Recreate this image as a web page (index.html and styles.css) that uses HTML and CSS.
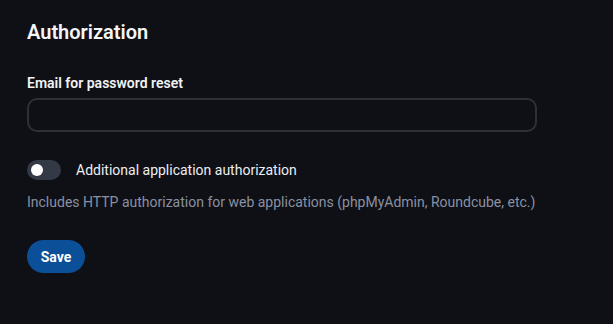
FILE: index.html
```html
<!DOCTYPE html>
<html lang="en">
<head>
    <meta charset="UTF-8">
    <meta name="viewport" content="width=device-width, initial-scale=1.0">
    <title>Authorization</title>
    <link rel="stylesheet" href="styles.css">
</head>
<body>
    <div class="panel">
        <h2 class="title">Authorization</h2>

        <label class="field-label" for="email">Email for password reset</label>
        <input class="field-input" id="email" type="email">

        <div class="toggle-row">
            <button class="toggle" aria-label="toggle"><span class="knob"></span></button>
            <span class="toggle-label">Additional application authorization</span>
        </div>
        <p class="hint">Includes HTTP authorization for web applications (phpMyAdmin, Roundcube, etc.)</p>

        <button class="save">Save</button>
    </div>
</body>
</html>
```

FILE: styles.css
```css
* {
    box-sizing: border-box;
    margin: 0;
    padding: 0;
}

body {
    font-family: Roboto, 'Liberation Sans', sans-serif;
    background: #0f1015;
    color: #f2f3f5;
    min-height: 100vh;
}

.panel {
    display: flex;
    flex-direction: column;
    align-items: flex-start;
    padding: 19px 27px;
    width: 564px;
}

.title {
    font-size: 20px;
    font-weight: 600;
    line-height: 26px;
    color: #f5f6f8;
}

.field-label {
    margin-top: 30px;
    font-size: 14px;
    font-weight: 600;
    line-height: 16px;
    color: #f2f3f5;
}

.field-input {
    margin-top: 7px;
    width: 100%;
    height: 34px;
    background: transparent;
    border: 2px solid #2c3039;
    border-radius: 10px;
    outline: none;
    color: #f2f3f5;
    padding: 0 12px;
}

.toggle-row {
    display: flex;
    align-items: center;
    gap: 15px;
    margin-top: 28px;
}

.toggle {
    width: 34px;
    height: 20px;
    border: none;
    border-radius: 10px;
    background: #343946;
    display: flex;
    align-items: center;
    padding: 0 4px;
    cursor: pointer;
}

.knob {
    width: 12px;
    height: 12px;
    border-radius: 50%;
    background: #ffffff;
}

.toggle-label {
    font-size: 14px;
    line-height: 20px;
    color: #eceef2;
}

.hint {
    margin-top: 13px;
    font-size: 14px;
    line-height: 18px;
    color: #8a91a3;
    white-space: nowrap;
}

.save {
    margin-top: 29px;
    width: 58px;
    height: 33px;
    border: none;
    border-radius: 17px;
    background: #0b4f98;
    color: #ffffff;
    font-family: Roboto, 'Liberation Sans', sans-serif;
    font-size: 14px;
    font-weight: 700;
    cursor: pointer;
}
```
